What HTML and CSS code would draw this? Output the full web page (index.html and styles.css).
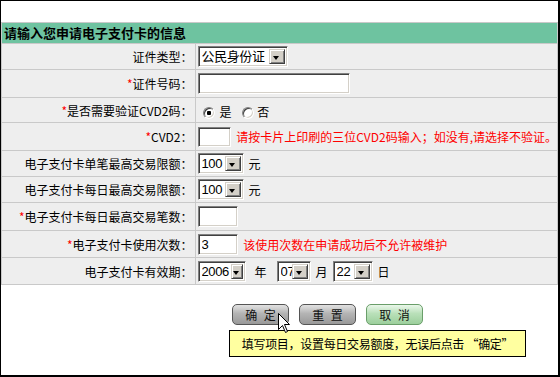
FILE: index.html
```html
<!DOCTYPE html>
<html lang="zh-CN">
  <head>
    <meta charset="UTF-8" />
    <link rel="stylesheet" href="styles.css">
    <title>电子支付卡申请</title>
  </head>
  <body>
    <div class="frame">
      <table class="apply-form">
        <tr>
          <td colspan="2" class="title">请输入您申请电子支付卡的信息</td>
        </tr>
        <tr class="h25">
          <td class="label">证件类型：</td>
          <td class="value">
            <span class="sel w-id"><select><option>公民身份证</option></select><span class="arr"></span></span>
          </td>
        </tr>
        <tr class="h27">
          <td class="label"><span class="req">*</span>证件号码：</td>
          <td class="value"><input type="text" class="txt w-idno" /></td>
        </tr>
        <tr class="h24">
          <td class="label"><span class="req">*</span>是否需要验证CVD2码：</td>
          <td class="value">
            <label class="radio"><input type="radio" name="cvd" checked />是</label>
            <label class="radio"><input type="radio" name="cvd" />否</label>
          </td>
        </tr>
        <tr class="h27">
          <td class="label"><span class="req">*</span>CVD2：</td>
          <td class="value">
            <input type="text" class="txt w-cvd" />
            <span class="tip">请按卡片上印刷的三位CVD2码输入；如没有,请选择不验证。</span>
          </td>
        </tr>
        <tr class="h25">
          <td class="label">电子支付卡单笔最高交易限额：</td>
          <td class="value">
            <span class="sel w-amt"><select><option>100</option></select><span class="arr"></span></span><span class="unit">元</span>
          </td>
        </tr>
        <tr class="h25">
          <td class="label">电子支付卡每日最高交易限额：</td>
          <td class="value">
            <span class="sel w-amt"><select><option>100</option></select><span class="arr"></span></span><span class="unit">元</span>
          </td>
        </tr>
        <tr class="h27">
          <td class="label"><span class="req">*</span>电子支付卡每日最高交易笔数：</td>
          <td class="value"><input type="text" class="txt w-num" /></td>
        </tr>
        <tr class="h26">
          <td class="label"><span class="req">*</span>电子支付卡使用次数：</td>
          <td class="value">
            <input type="text" class="txt w-num" value="3" />
            <span class="tip">该使用次数在申请成功后不允许被维护</span>
          </td>
        </tr>
        <tr class="h26">
          <td class="label">电子支付卡有效期：</td>
          <td class="value">
            <span class="sel w-year"><select><option>2006</option></select><span class="arr"></span></span><span class="unit u-year">年</span><span class="sel w-month"><select><option>07</option></select><span class="arr"></span></span><span class="unit">月</span><span class="sel w-day"><select><option>22</option></select><span class="arr"></span></span><span class="unit">日</span>
          </td>
        </tr>
      </table>

      <div class="actions">
        <button class="btn">确 定</button>
        <button class="btn">重 置</button>
        <button class="btn btn-cancel">取 消</button>
      </div>

      <div class="hint">填写项目，设置每日交易额度，无误后点击 “确定”</div>

      <svg class="cursor" width="13" height="21" viewBox="0 0 13 21">
        <path d="M0.5 0.5 L0.5 16.5 L4.5 12.5 L7.5 19.5 L9.5 18.5 L6.5 11.5 L11.5 11.5 Z" fill="#fff" stroke="#000" stroke-width="1" />
      </svg>
    </div>
  </body>
</html>
```

FILE: styles.css
```css
* {
  box-sizing: border-box;
}
body {
  margin: 0;
  font-family: "Noto Sans CJK SC", "Liberation Sans", sans-serif;
  font-size: 12px;
  color: #000;
  background: #fff;
}
.frame {
  position: relative;
  width: 560px;
  height: 377px;
  padding-top: 21px;
  border-style: solid;
  border-color: #000;
  border-width: 1px 2px 2px 1px;
  background: #fff;
}

/* form table */
.apply-form {
  width: 557px;
  border-collapse: separate;
  border-spacing: 1px;
  background: #c9c9c9;
}
.apply-form td {
  padding: 0;
  background: #eeeeee;
  white-space: nowrap;
}
.apply-form .title {
  height: 20px;
  padding-left: 2px;
  background: #6ec3a0;
  font-size: 13px;
  font-weight: bold;
  line-height: 20px;
}
.apply-form .label {
  width: 195px;
  padding-right: 2px;
  text-align: right;
}
.apply-form .value {
  padding-left: 2px;
}
.h24 td { height: 24px; }
.h25 td { height: 25px; }
.h26 td { height: 26px; }
.h27 td { height: 27px; }
.req {
  color: #f00;
}
.tip {
  margin-left: 3px;
  color: #f00;
  vertical-align: middle;
}
.unit {
  margin: 0 5px 0 5px;
  vertical-align: middle;
}
.unit.u-year {
  margin: 0 10px 0 9px;
}

/* classic sunken controls */
.txt,
.sel {
  display: inline-block;
  height: 21px;
  border: 1px solid;
  border-color: #808080 #fff #fff #808080;
  box-shadow: inset 1px 1px #404040, inset -1px -1px #d4d0c8;
  background: #fff;
  vertical-align: middle;
}
.txt {
  padding: 0 3px;
  font-family: "Liberation Sans", sans-serif;
  font-size: 13px;
  outline: 0;
}
.w-idno { width: 152px; }
.w-cvd { width: 33px; height: 20px; }
.w-num { width: 40px; }

.sel {
  position: relative;
}
.sel select {
  appearance: none;
  width: 100%;
  height: 100%;
  padding: 0 0 0 3px;
  border: 0;
  background: transparent;
  font-family: "Liberation Sans", "Noto Sans CJK SC", sans-serif;
  font-size: 13px;
  letter-spacing: -0.4px;
  color: #000;
  outline: 0;
}
.sel .arr {
  position: absolute;
  top: 2px;
  right: 2px;
  bottom: 2px;
  width: 16px;
  border: 1px solid;
  border-color: #d4d0c8 #404040 #404040 #d4d0c8;
  box-shadow: inset 1px 1px #fff, inset -1px -1px #808080;
  background: #d4d0c8;
  pointer-events: none;
}
.sel .arr::before {
  content: "";
  position: absolute;
  left: 50%;
  top: 6px;
  margin-left: -3.5px;
  border-style: solid;
  border-width: 4px 3.5px 0 3.5px;
  border-color: #000 transparent transparent transparent;
}
.w-id { width: 90px; }
.w-amt { width: 46px; }
.w-year { width: 48px; }
.w-year .arr { width: 12px; }
.w-month { width: 34px; }
.w-day { width: 40px; }

/* radios */
.radio {
  margin-right: 5px;
  vertical-align: middle;
}
.radio input {
  appearance: none;
  width: 12px;
  height: 12px;
  margin: 0 5px 0 5px;
  border: 1px solid;
  border-color: #808080 #fff #fff #808080;
  border-radius: 50%;
  box-shadow: inset 1px 1px #404040, inset -1px -1px #d4d0c8;
  background: #fff;
  vertical-align: -2px;
}
.radio input:checked {
  background: radial-gradient(circle, #000 0 2px, #fff 2.5px);
}
.radio + .radio input {
  margin-left: 3px;
  margin-right: 3px;
}

/* buttons */
.actions {
  display: flex;
  gap: 10px;
  margin-top: 19px;
  padding-left: 231px;
}
.btn {
  width: 57px;
  height: 21px;
  padding: 0;
  border: 1px solid #555;
  border-radius: 5px;
  background: linear-gradient(#e2e2e2, #b4b4b4 45%, #999);
  font-family: "Noto Sans CJK SC", sans-serif;
  font-size: 12px;
  word-spacing: 4px;
  color: #111;
  cursor: pointer;
}
.btn-cancel {
  border-color: #6a9e6a;
  background: linear-gradient(#eaf7ea, #b9e0b9 45%, #9ccf9c);
}
button:focus {
  outline: 0;
}

/* tooltip over the page */
.hint {
  position: absolute;
  left: 228px;
  top: 329px;
  width: 297px;
  height: 27px;
  border: 1px solid #000;
  background: #ffffa0;
  line-height: 25px;
  text-align: center;
  letter-spacing: -0.3px;
}
.cursor {
  position: absolute;
  left: 277px;
  top: 312px;
}
```
